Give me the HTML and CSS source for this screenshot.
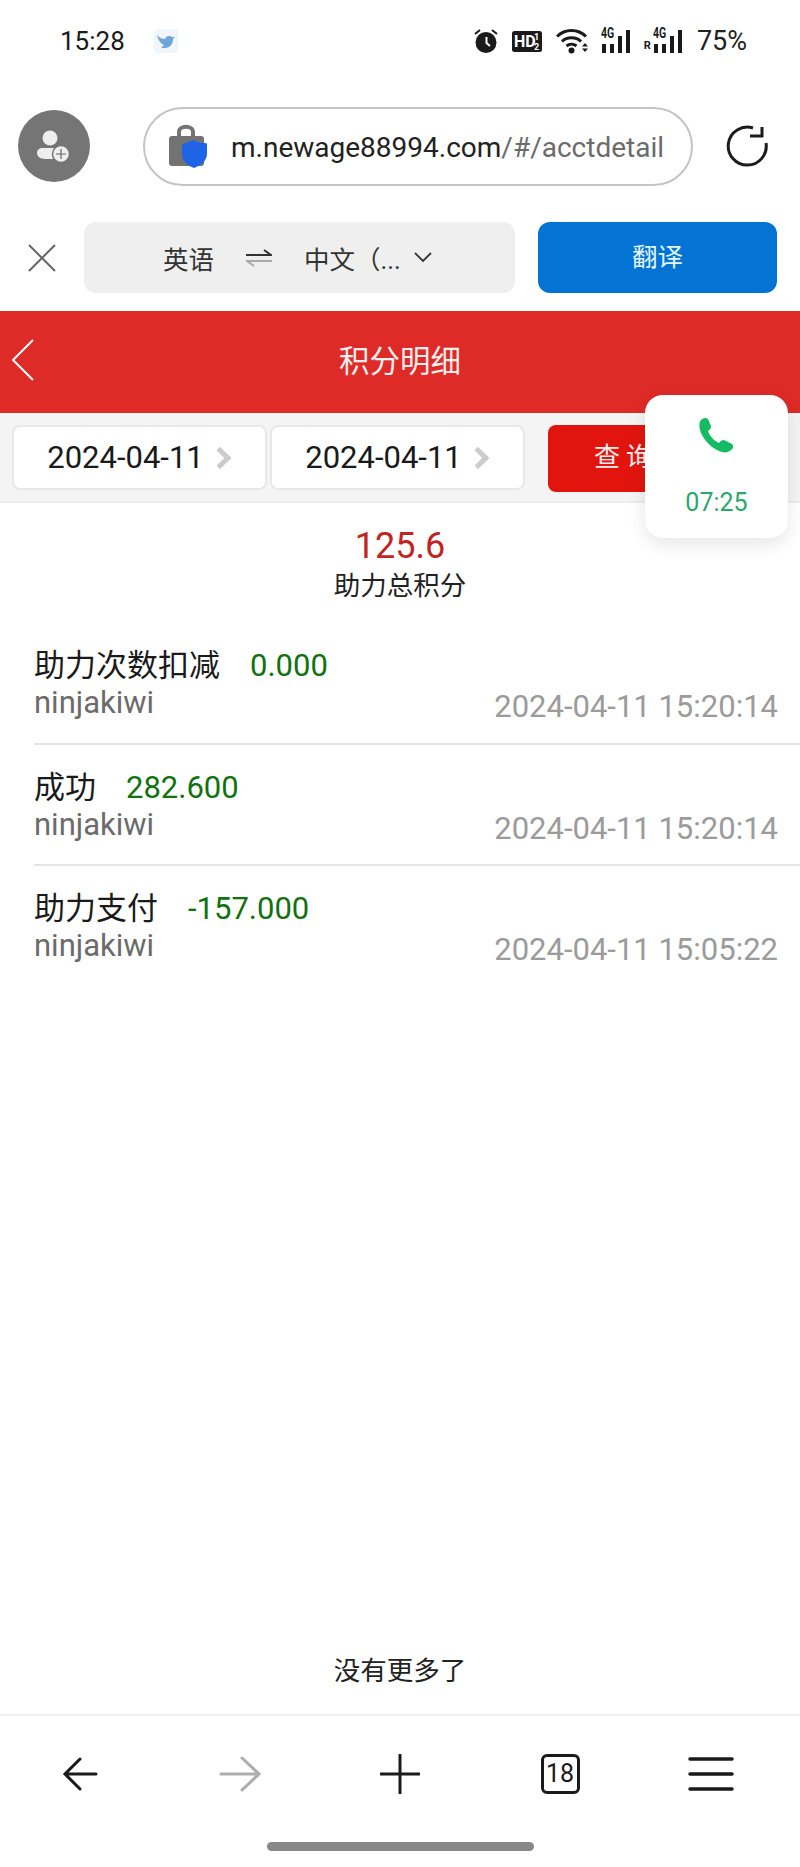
FILE: index.html
```html
<!DOCTYPE html>
<html lang="zh-CN">

<head>
    <meta charset="UTF-8">
    <meta name="viewport" content="width=device-width, initial-scale=1.0">
    <title>积分明细</title>
    <link rel="stylesheet" href="styles.css">
</head>

<body>
    <div class="status-bar">
        <span class="clock">15:28</span>
        <svg class="bird" width="24" height="24" viewBox="0 0 24 24">
            <rect width="24" height="24" rx="4" fill="#f1f6fb"/>
            <path d="M3 6c3 3 5 4 8 4 1-3 4-4 7-2l3 0-2 2c0 5-3 9-8 9-2 0-3 0-4-1 1 0 2-1 3-2-3-1-6-5-7-10z" fill="#6ea6d8"/>
        </svg>
        <div class="status-icons">
            <svg width="24" height="26" viewBox="0 0 24 26">
                <circle cx="12" cy="14.500" r="10.500" fill="#1a1a1a"/>
                <path d="M12.500 9v6l3.500 3" fill="none" stroke="#fff" stroke-width="2"/>
                <path d="M1 6l5-4M23 6l-5-4" stroke="#1a1a1a" stroke-width="2"/>
            </svg>
            <svg class="ml-14" width="30" height="21" viewBox="0 0 30 21">
                <rect width="30" height="21" rx="2.500" fill="#1a1a1a"/>
                <text x="2" y="16" class="hd-text">HD</text>
                <text x="22" y="9" class="hd-small">1</text>
                <text x="22" y="19" class="hd-small">2</text>
            </svg>
            <svg class="ml-14" width="33" height="26" viewBox="0 0 33 26">
                <path d="M1 8.500c8-8 21-8 29 0M6 13.500c5-5 14-5 19 0M10.500 18c3-2.500 7-2.500 10 0" fill="none" stroke="#1a1a1a" stroke-width="3"/>
                <circle cx="15.500" cy="22.500" r="3" fill="#1a1a1a"/>
                <path d="M26 18.500l3-3.500 3 3.500zM26 20.500h6l-3 3.500z" fill="#1a1a1a"/>
            </svg>
            <div class="signal ml-11">
                <span class="net">4G</span>
                <i class="b1"></i><i class="b2"></i><i class="b3"></i><i class="b4"></i>
            </div>
            <span class="roam">R</span>
            <div class="signal">
                <span class="net">4G</span>
                <i class="b1"></i><i class="b2"></i><i class="b3"></i><i class="b4"></i>
            </div>
            <span class="battery">75%</span>
        </div>
    </div>

    <div class="address-row">
        <div class="avatar">
            <svg width="72" height="72" viewBox="0 0 72 72">
                <circle cx="32" cy="28" r="7.500" fill="#eee"/>
                <path d="M25 38h14c4 0 5 2 5 5 0 3-1 6-5 6H27c-5 0-8-3-8-6 0-3 2-5 6-5z" fill="#eee"/>
                <circle cx="43" cy="44" r="8.500" fill="#eee" stroke="#757575" stroke-width="1.500"/>
                <path d="M43 39v10M38 44h10" stroke="#666" stroke-width="1.200"/>
            </svg>
        </div>
        <div class="url-pill">
            <svg class="lock" width="40" height="46" viewBox="0 0 40 46">
                <path d="M11 14V9c0-7 14-7 14 0v5" fill="none" stroke="#737373" stroke-width="4"/>
                <rect x="1" y="13" width="35" height="30" rx="3" fill="#737373"/>
                <path d="M15 21c4-1 7-3 10-4 3 1 7 3 10 3 3 0 4 0 4 1v10c0 7-7 12-13 14-6-2-12-7-12-14v-9z" fill="#1f63e6"/>
            </svg>
            <span class="url"><b>m.newage88994.com</b>/#/acctdetail</span>
        </div>
        <svg class="reload" width="44" height="44" viewBox="0 0 44 44">
            <path d="M28 4A19 19 0 1 0 41 19" fill="none" stroke="#1c1c1c" stroke-width="3"/>
            <path d="M25 12h12V3" fill="none" stroke="#1c1c1c" stroke-width="3"/>
        </svg>
    </div>

    <div class="translate-row">
        <svg class="close" width="28" height="28" viewBox="0 0 28 28">
            <path d="M1 1l26 26M27 1L1 27" stroke="#666" stroke-width="2"/>
        </svg>
        <div class="lang-box">
            <span>英语</span>
            <svg class="swap" width="26" height="20" viewBox="0 0 26 20">
                <path d="M0 7h25l-7-5" fill="none" stroke="#333" stroke-width="2"/>
                <path d="M26 13H1l7 5" fill="none" stroke="#aaa" stroke-width="2"/>
            </svg>
            <span>中文（...</span>
            <svg class="chevron" width="18" height="11" viewBox="0 0 18 11">
                <path d="M1 1l8 8 8-8" fill="none" stroke="#333" stroke-width="1.800"/>
            </svg>
        </div>
        <div class="translate-btn">翻译</div>
    </div>

    <div class="title-bar">
        <svg class="back" width="24" height="42" viewBox="0 0 24 42">
            <path d="M22 1L2 21l20 20" fill="none" stroke="#fff" stroke-width="2"/>
        </svg>
        <span>积分明细</span>
    </div>

    <div class="filter-row">
        <div class="date-box">2024-04-11<em></em></div>
        <div class="date-box">2024-04-11<em></em></div>
        <div class="query-btn">查询</div>
    </div>

    <div class="total">
        <div class="total-num">125.6</div>
        <div class="total-label">助力总积分</div>
    </div>

    <ul class="records">
        <li class="record">
            <div class="record-title">助力次数扣减<span class="amount">0.000</span></div>
            <div class="record-sub"><span>ninjakiwi</span><time>2024-04-11 15:20:14</time></div>
        </li>
        <li class="record">
            <div class="record-title">成功<span class="amount">282.600</span></div>
            <div class="record-sub"><span>ninjakiwi</span><time>2024-04-11 15:20:14</time></div>
        </li>
        <li class="record">
            <div class="record-title">助力支付<span class="amount">-157.000</span></div>
            <div class="record-sub"><span>ninjakiwi</span><time>2024-04-11 15:05:22</time></div>
        </li>
    </ul>

    <div class="no-more">没有更多了</div>

    <div class="tool-bar">
        <svg width="36" height="36" viewBox="0 0 36 36">
            <path d="M18 3L3 18l15 15M3 18h31" fill="none" stroke="#1a1a1a" stroke-width="3" stroke-linecap="round"/>
        </svg>
        <svg width="42" height="36" viewBox="0 0 42 36">
            <path d="M23 2l17 16-17 16M40 18H2" fill="none" stroke="#adadad" stroke-width="3" stroke-linecap="round"/>
        </svg>
        <svg width="40" height="40" viewBox="0 0 40 40">
            <path d="M20 1v38M1 20h38" fill="none" stroke="#1a1a1a" stroke-width="3" stroke-linecap="round"/>
        </svg>
        <div class="tabs">18</div>
        <svg width="46" height="36" viewBox="0 0 46 36">
            <path d="M2 3h42M2 18h42M2 33h42" fill="none" stroke="#1a1a1a" stroke-width="3.500" stroke-linecap="round"/>
        </svg>
    </div>

    <div class="home-area"><div class="home-bar"></div></div>

    <div class="call-card">
        <svg width="38" height="38" viewBox="0 0 38 38">
            <path d="M3 3c2-2 5-3 7-1l3 7c0 2-1 4-3 5 1 4 6 10 11 12 1-2 3-3 5-3l8 4c2 2 1 5-1 6-3 3-8 3-12 1C12 30 4 21 2 13 1 9 1 5 3 3z" fill="#14bb62"/>
        </svg>
        <span>07:25</span>
    </div>
</body>

</html>
```

FILE: styles.css
```css
* {
    margin: 0px;
    padding: 0px;
    box-sizing: border-box;
}

body {
    width: 800px;
    height: 1867px;
    display: flex;
    flex-direction: column;
    position: relative;
    overflow: hidden;
    background-color: #fff;
    color: #1a1a1a;
    font-family: Roboto, "Noto Sans CJK SC", sans-serif;
}

/* status bar */
.status-bar {
    height: 82px;
    display: flex;
    align-items: center;
    padding: 0 53px 0 60px;
}

.clock {
    font-size: 26px;
}

.bird {
    margin-left: 29px;
}

.status-icons {
    margin-left: auto;
    display: flex;
    align-items: center;
}

.ml-14 {
    margin-left: 14px;
}

.ml-11 {
    margin-left: 13px;
}

.hd-text {
    font-size: 16px;
    font-weight: bold;
    fill: #fff;
}

.hd-small {
    font-size: 9px;
    font-weight: bold;
    fill: #fff;
}

.signal {
    position: relative;
    width: 32px;
    height: 23px;
    display: flex;
    align-items: flex-end;
    gap: 4px;
}

.signal i {
    display: block;
    width: 4px;
    background-color: #1a1a1a;
}

.signal .b1,
.signal .b2 {
    height: 9px;
}

.signal .b3 {
    height: 17px;
}

.signal .b4 {
    height: 23px;
}

.net {
    position: absolute;
    left: -1px;
    top: -4px;
    font-size: 15px;
    line-height: 15px;
    font-weight: bold;
    transform: scaleX(0.7);
    transform-origin: left;
}

.roam {
    margin: 8px 3px 0 10px;
    font-size: 11px;
    font-weight: bold;
}

.battery {
    margin-left: 11px;
    font-size: 27px;
    color: #222;
}

/* address row */
.address-row {
    height: 128px;
    display: flex;
    align-items: center;
    padding-left: 18px;
}

.avatar {
    width: 72px;
    height: 72px;
    border-radius: 50%;
    background-color: #757575;
}

.url-pill {
    width: 550px;
    height: 79px;
    margin-left: 53px;
    display: flex;
    align-items: center;
    padding-left: 23px;
    border: 2px solid #c4c4c4;
    border-radius: 40px;
}

.url {
    margin: 2px 0 0 23px;
    font-size: 28px;
    color: #6b6b6b;
    white-space: nowrap;
}

.url b {
    font-weight: normal;
    color: #222;
}

.reload {
    margin-left: 32px;
}

/* translate row */
.translate-row {
    height: 101px;
    display: flex;
    align-items: flex-start;
    padding: 12px 23px 0 28px;
}

.close {
    margin-top: 22px;
}

.lang-box {
    width: 431px;
    height: 71px;
    margin-left: 28px;
    display: flex;
    align-items: center;
    padding-left: 79px;
    border-radius: 12px;
    background-color: #efefef;
    font-size: 25.500px;
    color: #333;
    white-space: nowrap;
}

.swap {
    margin: 0 32px 0 32px;
}

.chevron {
    margin-left: 13px;
}

.translate-btn {
    width: 239px;
    height: 71px;
    margin-left: auto;
    border-radius: 12px;
    background-color: #0474d4;
    color: #e4f6ff;
    font-size: 25.500px;
    line-height: 71px;
    text-align: center;
}

/* page header */
.title-bar {
    height: 102px;
    display: flex;
    align-items: center;
    justify-content: center;
    position: relative;
    padding-bottom: 6px;
    background-color: #de2b27;
    color: #fbeeee;
    font-size: 30.500px;
}

.back {
    position: absolute;
    left: 11px;
    top: 28px;
}

.filter-row {
    height: 90px;
    display: flex;
    gap: 3px;
    padding: 12px 12px 0;
    background-color: #f4f4f4;
    border-bottom: 2px solid #ececec;
}

.date-box {
    width: 255px;
    height: 65px;
    display: flex;
    align-items: center;
    justify-content: center;
    border: 2px solid #e8e8e8;
    border-radius: 8px;
    background-color: #fff;
    font-size: 31px;
    color: #1a1a1a;
}

.date-box em {
    width: 16px;
    height: 16px;
    margin: 0 4px 0 8px;
    border-top: 5px solid #ccc;
    border-right: 5px solid #ccc;
    transform: rotate(45deg);
}

.query-btn {
    width: 180px;
    height: 67px;
    margin-left: 20px;
    padding-left: 46px;
    border-radius: 8px;
    background-color: #e1150e;
    color: #fbeeee;
    font-size: 26px;
    letter-spacing: 6px;
    line-height: 64px;
}

/* total */
.total {
    padding-top: 21px;
    text-align: center;
}

.total-num {
    font-size: 36px;
    line-height: 44px;
    color: #c0251f;
}

.total-label {
    font-size: 26.500px;
    line-height: 35px;
    color: #222;
}

/* list */
.records {
    list-style: none;
    margin-top: 20px;
    padding-left: 34px;
}

.record {
    height: 121.500px;
    padding-top: 23px;
    border-bottom: 2px solid #e4e4e4;
}

.record:last-child {
    border-bottom: none;
}

.record-title {
    font-size: 31px;
    line-height: 40px;
    color: #1a1a1a;
}

.amount {
    margin-left: 30px;
    color: #11720f;
}

.record-sub {
    display: flex;
    justify-content: space-between;
    padding-right: 22px;
    font-size: 31px;
    line-height: 34px;
    color: #6b6b6b;
}

.record-sub time {
    padding-top: 4px;
    font-size: 31px;
    color: #9b9b9b;
}

.no-more {
    margin-top: auto;
    height: 68px;
    font-size: 26.500px;
    line-height: 50px;
    text-align: center;
    color: #222;
}

/* browser toolbar */
.tool-bar {
    height: 118px;
    display: grid;
    grid-template-columns: repeat(4, 160px) 142px;
    align-items: center;
    justify-items: center;
    border-top: 2px solid #f1f1f1;
}

.tabs {
    width: 39px;
    height: 40px;
    border: 3px solid #1a1a1a;
    border-radius: 6px;
    font-size: 25px;
    line-height: 33px;
    text-align: center;
}

.home-area {
    height: 35px;
    padding-top: 10px;
}

.home-bar {
    width: 267px;
    height: 9px;
    margin: 0 auto;
    border-radius: 5px;
    background-color: #888;
}

/* floating call card */
.call-card {
    position: absolute;
    left: 645px;
    top: 395px;
    width: 143px;
    height: 143px;
    display: flex;
    flex-direction: column;
    align-items: center;
    padding-top: 22px;
    border-radius: 18px;
    background-color: #fff;
    box-shadow: 0 6px 18px rgba(0, 0, 0, 0.1);
    color: #2aa86e;
    font-size: 25px;
}

.call-card span {
    margin-top: 33px;
}
```
